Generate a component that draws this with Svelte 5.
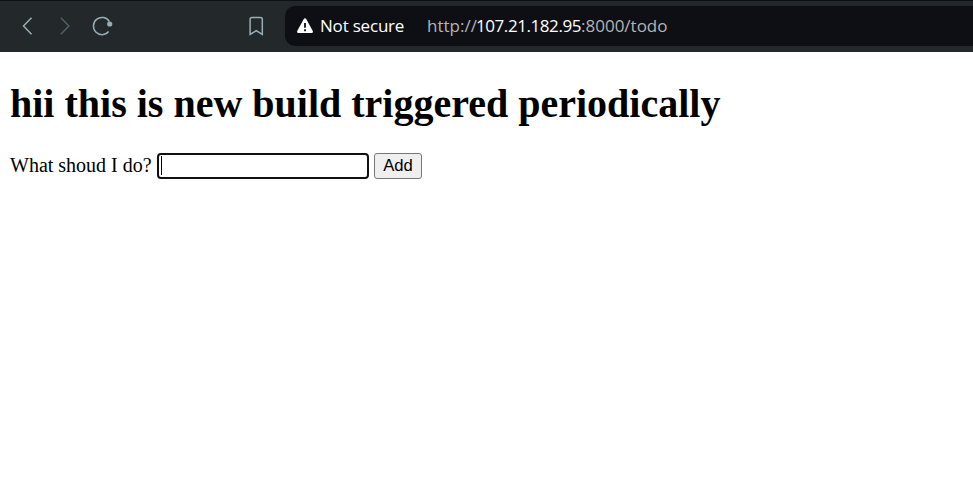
<script>
  let task = $state('');
</script>

<header class="toolbar">
  <nav class="controls">
    <svg class="back" width="20" height="20" viewBox="0 0 20 20"><path d="M14.5 1.8 6.5 10l8 8.2" /></svg>
    <svg class="forward" width="20" height="20" viewBox="0 0 20 20"><path d="m5.8 1.8 8.1 8.2-8.1 8.2" /></svg>
    <svg class="reload" width="22" height="22" viewBox="0 0 22 22">
      <path d="M18.4 6.6A8.6 8.6 0 1 0 17.6 16.6" />
      <circle cx="18.7" cy="9" r="2.6" />
    </svg>
    <svg class="bookmark" width="16" height="22" viewBox="0 0 16 22"><path d="M3.9 2.4h8.6q1.8 0 1.8 1.8v15.2l-6.1-3.7-6.1 3.7V4.2q0-1.8 1.8-1.8Z" /></svg>
  </nav>
  <div class="address">
    <svg class="warning" width="18" height="18" viewBox="0 0 18 18">
      <path d="M7.8 2.1q1.2-1.7 2.4 0l6.6 12q.8 1.9-1.2 2H2.4q-2-.1-1.2-2Z" />
      <path class="mark" d="M9 6v4.8M9 12.2v2" />
    </svg>
    <span class="status">Not secure</span>
    <span class="url"><span class="scheme">http://</span><span class="host">107.21.182.95</span><span class="path">:8000/todo</span></span>
  </div>
</header>

<main>
  <h1>hii this is new build triggered periodically</h1>
  <form onsubmit={(event) => event.preventDefault()}>
    <label for="task">What shoud I do?</label>
    <span class="field">
      <span class="caret"></span>
      <input id="task" type="text" bind:value={task} />
    </span>
    <button type="submit">Add</button>
  </form>
</main>

<style>
  :global(body) {
    margin: 0;
    background: #fff;
  }
  .toolbar {
    box-sizing: border-box;
    display: flex;
    height: 52px;
    border-top: 1px solid #0e0f14;
    background: #23282b;
  }
  .controls {
    box-sizing: border-box;
    display: flex;
    align-items: center;
    width: 285px;
    padding: 0 0 1px 17px;
  }
  svg {
    display: block;
    flex: none;
    fill: none;
    stroke: #9badb5;
    stroke-width: 1.5;
  }
  .forward {
    margin-left: 18px;
    stroke: #535e62;
  }
  .reload {
    margin-left: 16px;
  }
  .reload circle {
    fill: #9badb5;
    stroke: none;
  }
  .bookmark {
    margin-left: 135px;
  }
  .address {
    display: flex;
    flex: 1;
    align-items: center;
    height: 40px;
    margin-top: 5px;
    padding-left: 11px;
    border-radius: 10px 0 0 10px;
    background: #0e0f14;
    font: 17px/24px "Open Sans", sans-serif;
    white-space: nowrap;
  }
  .warning {
    fill: #fff;
    stroke: none;
  }
  .warning .mark {
    stroke: #0e0f14;
    stroke-width: 1.8;
  }
  .status {
    width: 107px;
    margin-left: 6px;
    color: #fff;
    letter-spacing: -0.2px;
  }
  .url {
    display: flex;
    color: #b3b4b6;
  }
  .scheme {
    width: 49px;
  }
  .host {
    width: 105px;
    color: #fff;
    letter-spacing: -0.43px;
  }
  main {
    padding: 0 10px;
    font: 20px/23px "Liberation Serif", "Times New Roman", serif;
    color: #000;
  }
  h1 {
    margin: 0;
    padding-top: 29px;
    font-size: 40px;
    line-height: 46px;
  }
  form {
    display: flex;
    align-items: center;
    margin-top: 26px;
  }
  label {
    width: 147px;
    padding-bottom: 2px;
    white-space: nowrap;
  }
  .field {
    position: relative;
    display: flex;
  }
  input {
    box-sizing: border-box;
    width: 212px;
    height: 26px;
    margin: 0;
    padding: 1px 3px;
    border: 2px solid #101010;
    border-radius: 4px;
    outline: none;
    background: #fff;
    font: 16.667px "Liberation Sans", Arial, sans-serif;
  }
  .caret {
    position: absolute;
    top: 3px;
    left: 4px;
    width: 1px;
    height: 19px;
    background: #000;
  }
  button {
    box-sizing: border-box;
    width: 48px;
    height: 26px;
    margin: 0 0 0 5px;
    padding: 0;
    border: 1px solid #767676;
    border-radius: 3px;
    background: #efefef;
    color: #000;
    font: 16.667px/24px "Liberation Sans", Arial, sans-serif;
  }
</style>
